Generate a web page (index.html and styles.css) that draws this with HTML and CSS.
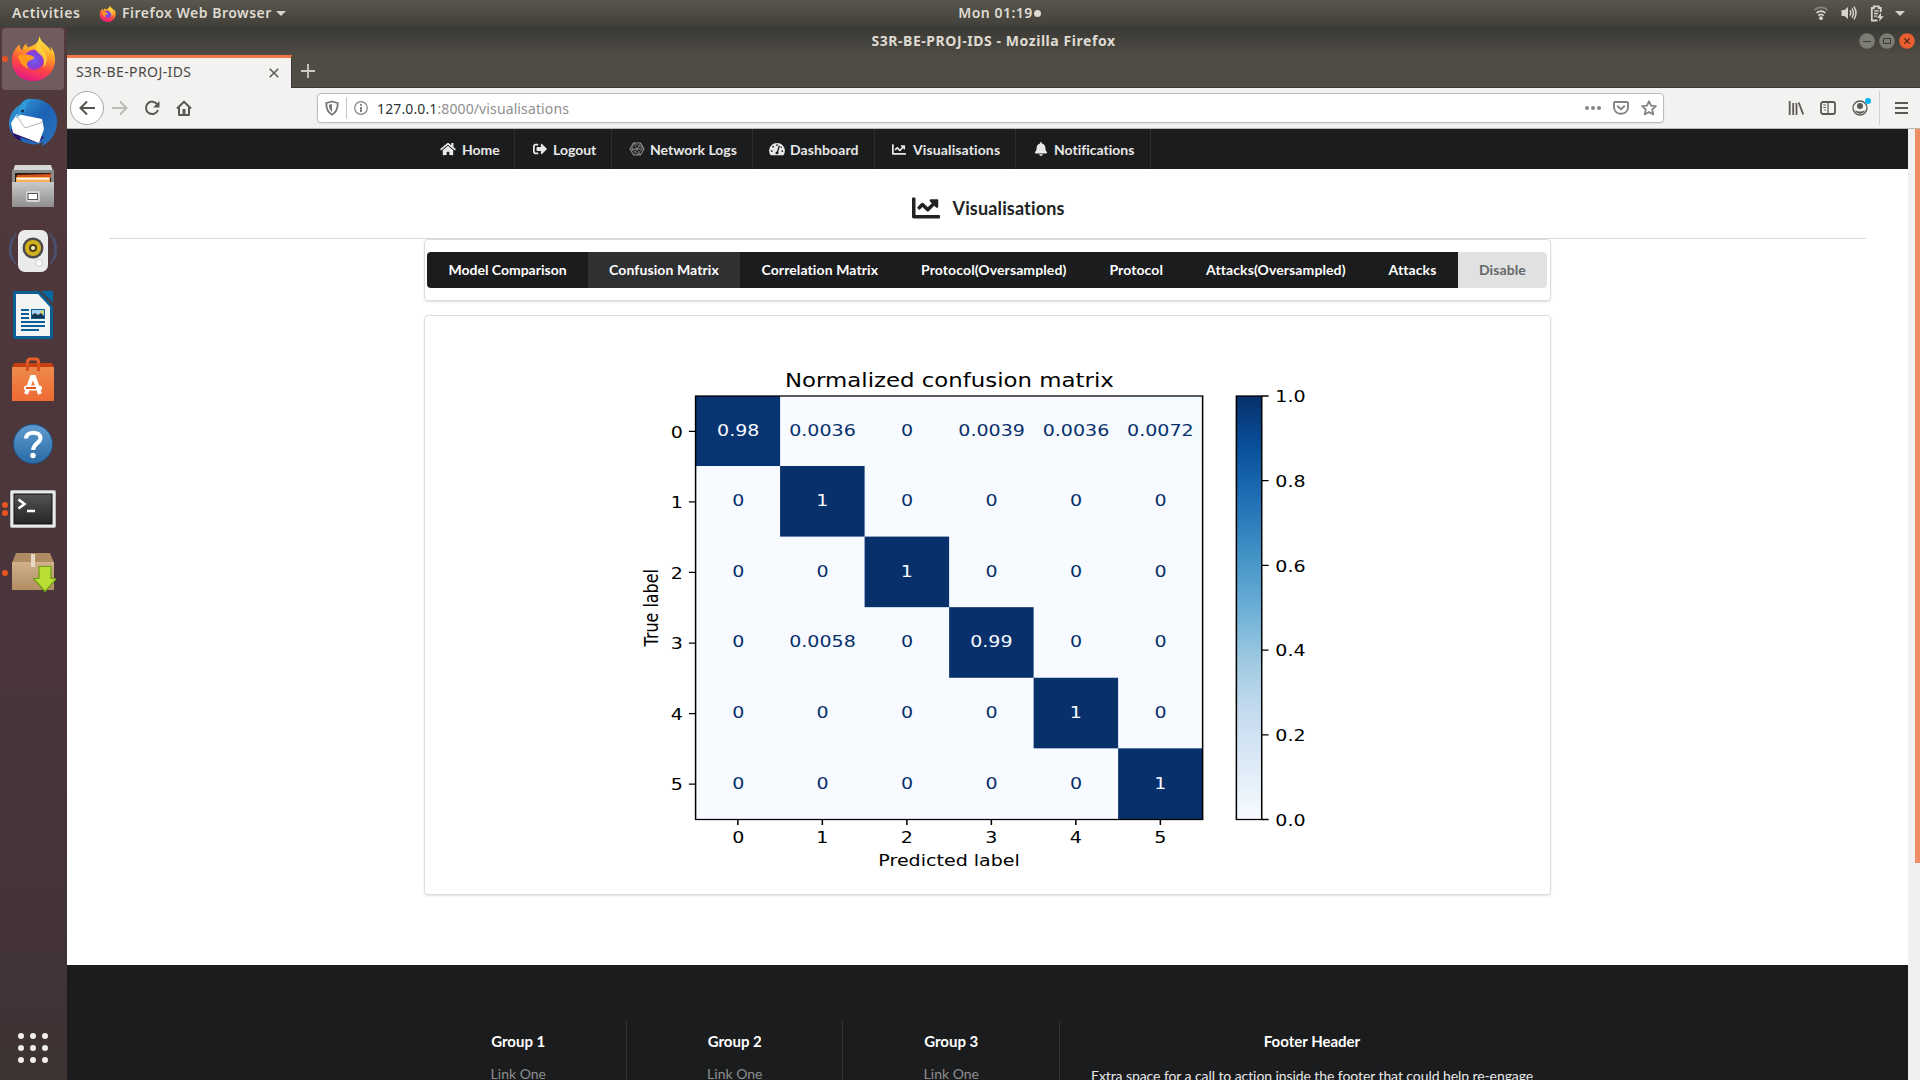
FILE: index.html
```html
<!DOCTYPE html>
<html lang="en">
<head>
<meta charset="utf-8">
<title>S3R-BE-PROJ-IDS</title>
<link rel="stylesheet" href="styles.css">
</head>
<body>
<svg width="0" height="0" class="defs">
  <defs>
    <linearGradient id="ffBody" x1="0.7" y1="0" x2="0.35" y2="1"><stop offset="0" stop-color="#fff44f"/><stop offset="0.35" stop-color="#ffa726"/><stop offset="0.65" stop-color="#ff4a40"/><stop offset="1" stop-color="#e5178a"/></linearGradient>
    <radialGradient id="ffGlobe"><stop offset="0" stop-color="#7a5cf5"/><stop offset="0.6" stop-color="#7b45d8"/><stop offset="1" stop-color="#a034d0"/></radialGradient>
    <symbol id="firefox" viewBox="0 0 48 48">
      <path fill="url(#ffBody)" d="M31 1c-1 3-1 5-4 8-3 2-6 3-8 4-1-1-2-2-2-4-3 2-4 4-4 7-1 0-3-2-3-6C4 15 2 21 2 27c0 12 10 21 22 21s23-9 23-22c0-7-2-11-5-14 1 2 1 4 1 5C41 11 31 8 31 1z"/>
      <circle cx="25" cy="26" r="10.5" fill="url(#ffGlobe)"/>
      <path fill="#ff9a1f" d="M8 22c4-2 9-2 13-1 2 1 4 1 4 3-1 2-5 2-7 5-1 2 0 4 2 6-6-1-9-5-12-13z"/>
      <path fill="#ffd53b" opacity=".85" d="M29 8c1 4 7 7 9 13 1 5 0 10-3 13 1-4 1-9-2-12-2-3-6-4-6-8 0-3 1-5 2-6z"/>
    </symbol>
    <symbol id="chart-line" viewBox="0 56 512 400"><path fill="currentColor" d="M496 384H64V80c0-8.84-7.16-16-16-16H16C7.16 64 0 71.16 0 80v336c0 17.67 14.33 32 32 32h464c8.84 0 16-7.16 16-16v-32c0-8.84-7.16-16-16-16zM464 96H345.94c-21.38 0-32.09 25.85-16.97 40.97l32.4 32.4L288 242.75l-73.37-73.37c-12.5-12.5-32.76-12.5-45.25 0l-68.69 68.69c-6.25 6.25-6.25 16.38 0 22.63l22.62 22.62c6.25 6.25 16.38 6.25 22.63 0L192 237.25l73.37 73.37c12.5 12.5 32.76 12.5 45.25 0l96-96 32.4 32.4c15.12 15.12 40.97 4.41 40.97-16.97V112c.01-8.84-7.15-16-15.99-16z"/></symbol>
    <linearGradient id="blues" x1="0" y1="0" x2="0" y2="1">
      <stop offset="0" stop-color="#08306b"/><stop offset=".125" stop-color="#08519c"/><stop offset=".25" stop-color="#2171b5"/><stop offset=".375" stop-color="#4292c6"/><stop offset=".5" stop-color="#6baed6"/><stop offset=".625" stop-color="#9ecae1"/><stop offset=".75" stop-color="#c6dbef"/><stop offset=".875" stop-color="#deebf7"/><stop offset="1" stop-color="#f7fbff"/>
    </linearGradient>
    <linearGradient id="metal" x1="0" y1="0" x2="0" y2="1"><stop offset="0" stop-color="#c9c9c9"/><stop offset="1" stop-color="#8f8f8f"/></linearGradient>
    <linearGradient id="tb" x1="0" y1="0" x2="1" y2="1"><stop offset="0" stop-color="#37a5dd"/><stop offset=".5" stop-color="#1d62b5"/><stop offset="1" stop-color="#2a74bd"/></linearGradient>
    <linearGradient id="bag" x1="0" y1="0" x2="0" y2="1"><stop offset="0" stop-color="#ee8a4c"/><stop offset="1" stop-color="#ee6b33"/></linearGradient>
    <linearGradient id="help" x1="0" y1="0" x2="0" y2="1"><stop offset="0" stop-color="#5f9bd0"/><stop offset="1" stop-color="#2a6ba6"/></linearGradient>
    <linearGradient id="term" x1="0" y1="0" x2="0" y2="1"><stop offset="0" stop-color="#555"/><stop offset="1" stop-color="#242424"/></linearGradient>
    <linearGradient id="box" x1="0" y1="0" x2="0" y2="1"><stop offset="0" stop-color="#cfb18a"/><stop offset="1" stop-color="#b28e63"/></linearGradient>
  </defs>
</svg>

<header class="topbar">
  <div class="topbar-left">
    <span class="activities">Activities</span>
    <svg class="ff-small" width="17" height="17"><use href="#firefox"/></svg>
    <span class="app-name">Firefox Web Browser</span>
    <i class="caret"></i>
  </div>
  <div class="clock"><span>Mon 01:19</span><i class="dot"></i></div>
  <div class="tray">
    <svg width="16" height="16" viewBox="0 0 16 16" fill="none" stroke="#d6d3cc" stroke-width="1.8"><path d="M1.5 5.2a9 9 0 0 1 13 0" opacity=".4"/><path d="M3.6 8a6 6 0 0 1 8.8 0"/><path d="M5.4 10.6a3.4 3.4 0 0 1 5.2 0"/><circle cx="8" cy="13.2" r="1.9" fill="#d6d3cc" stroke="none"/></svg>
    <svg width="16" height="16" viewBox="0 0 16 16" fill="none" stroke="#d6d3cc" stroke-width="1.5"><path d="M.5 5h3L7 2v12l-3.500-3h-3z" fill="#d6d3cc" stroke="none"/><path d="M9 5.500q1.500 2.500 0 5M11 3.500q3 4.500 0 9M13 1.700q4 6.300 0 12.600"/></svg>
    <svg width="16" height="17" viewBox="0 0 16 17" fill="none" stroke="#d6d3cc" stroke-width="1.8"><path d="M8.500 15.500H2.800V3h2V1.300h5V3h2v4"/><path d="M5 5.800h5M5 8.500h4M5 11.200h3" stroke-width="1.300"/><path d="M12 7.500 8 13h2.800L10 16.500l4.800-5.300H12z" fill="#d6d3cc" stroke="none"/></svg>
    <i class="caret"></i>
  </div>
</header>

<div class="desktop">
  <nav class="launcher">
    <div class="app active"><i class="pips"><b></b></i><svg width="46" height="48"><use href="#firefox"/></svg></div>
    <div class="app"><svg width="50" height="50" viewBox="0 0 50 50">
      <path fill="url(#tb)" d="M12 8C15 3 20 1 23 2c12-1 24 6 26 20 1 12-5 22-15 27 0-2 1-3 1-4-4 2-8 3-12 2C9 45 1 37 1 27 1 18 6 11 12 8z"/>
      <path fill="#2b0f66" d="M3 32c1 6 5 10 10 12l-1-4 18 6 6-6z"/>
      <path fill="#fff" d="M3 26 9 17 34 22l2 10-5 14L5 36z"/><path d="m8 18 9 13 18-6" fill="none" stroke="#b5b5b5"/>
      <path fill="#2f9bd6" d="M10 17c0-8 5-14 12-15-4 4-3 9-6 13l-8 6z"/><circle cx="14.500" cy="14" r="1.500" fill="#1d2b4f"/></svg></div>
    <div class="app"><svg width="44" height="46" viewBox="0 0 44 46">
      <path fill="#d8d8d8" d="M4 1h36l2 6H2z"/><path fill="#8c8c8c" d="M1 6h42v36H1z"/><path fill="#2b1a10" d="M4 9h36v12H4z"/><path fill="#d9531e" d="m6 11 34-1v4H6z"/><path fill="#f7b25a" d="M5 13h34v7H5z"/><path fill="#fff" d="M6 14h32v1.500H6z"/>
      <path fill="url(#metal)" d="M1 18h42v25H1z"/><rect x="15" y="27" width="14" height="11" rx="2" fill="#d5d5d5"/><rect x="17" y="29.500" width="9.500" height="6" fill="#fff" stroke="#555"/></svg></div>
    <div class="app"><svg width="50" height="46" viewBox="0 0 50 46">
      <g fill="none" stroke="#4a5070" stroke-width="1.500"><path d="M8 5q-10 17 0 32M4 10q-5 12 0 22M42 5q10 17 0 32M46 10q5 12 0 22"/></g>
      <rect x="10" y="2" width="30" height="42" rx="7" fill="#ebebeb"/><circle cx="25" cy="20" r="10.500" fill="#4b4b4b"/><circle cx="25" cy="20" r="8" fill="#d3b11e"/><circle cx="25" cy="20" r="4" fill="#4b3f13"/><circle cx="25" cy="20" r="2" fill="#f5efc9"/><circle cx="31" cy="35" r="3.500" fill="#fafafa" stroke="#ccc"/></svg></div>
    <div class="app"><svg width="40" height="48" viewBox="0 0 40 48">
      <path fill="#0c5f95" d="M1 0h27l12 13v33q0 2-2 2H2q-2 0-2-2V1z"/><path fill="#f3f4f5" d="M3 3h22l12 13v29H3z"/><path fill="#4c373b" d="M26 0h3l11 12.500v3z"/><path fill="#0369a3" d="M28 0h12v12z"/>
      <path stroke="#0c5f95" stroke-width="2" d="M8 19h8M8 23h8M8 27h8M8 31h24M8 35h24M8 39h18"/><rect x="18" y="18" width="14" height="10" fill="#0c5f95"/><rect x="19" y="19" width="12" height="8" fill="#a6d4ef"/><path fill="#15364c" d="m19 27v-3l3-2 3 2 3-2 3 3v2z"/><circle cx="29" cy="21" r="1.500" fill="#f2c52d"/></svg></div>
    <div class="app"><svg width="42" height="44" viewBox="0 0 42 44">
      <path fill="#c8400f" d="M2 6h38l2 5H0z"/><path fill="none" stroke="#e9602b" stroke-width="3" d="M15.500 14V5q0-3 3-3h5q3 0 3 3v9"/><path fill="url(#bag)" d="M0 10h42v34H0z"/><path fill="none" stroke="#d8501c" stroke-width="3" d="M15.500 14V6M26.500 14V6"/>
      <path fill="none" stroke="#fff" stroke-width="4" d="m14 37 6-17h2l6 17"/><rect x="12" y="28.500" width="18" height="5" rx="2.500" fill="#fff"/><path stroke="#e8591f" stroke-width="2" d="M14 31h10"/></svg></div>
    <div class="app"><svg width="40" height="40" viewBox="0 0 40 40"><circle cx="20" cy="20" r="19.500" fill="url(#help)" stroke="#1f5788"/><path fill="none" stroke="#fff" stroke-width="4" d="M13 14.500c0-8 14.500-7.500 14.500-.5 0 5.500-7.300 5-7.300 12"/><circle cx="20" cy="31.500" r="2.700" fill="#fff"/></svg></div>
    <div class="app low"><i class="pips"><b></b><b></b></i><svg width="46" height="38" viewBox="0 0 46 38"><rect width="46" height="38" rx="2" fill="#b9b9b9"/><rect x="1" y="1" width="44" height="36" fill="#e9e9e9"/><rect x="4" y="4" width="38" height="30" fill="url(#term)" stroke="#111"/><path fill="none" stroke="#fff" stroke-width="2.600" d="m8.500 9.500 6 4.500-6 4.500M17 21h8"/></svg></div>
    <div class="app low"><i class="pips"><b></b></i><svg width="46" height="40" viewBox="-2 0 46 40"><path fill="#ae8b63" d="M4 0h34l4 10H0z"/><path fill="url(#box)" d="M0 9h42v28H0z"/><path fill="#e6d8c4" d="M19 1h4v13h-4z"/><path fill="#b9df35" stroke="#6d9c17" stroke-width="1.200" d="M27 13.500h12v12h5.500L33 38.500 21.500 25.500H27z"/></svg></div>
    <div class="grid-button"><i></i><i></i><i></i><i></i><i></i><i></i><i></i><i></i><i></i></div>
  </nav>

  <main class="window">
    <div class="titlebar">
      <span class="window-title">S3R-BE-PROJ-IDS - Mozilla Firefox</span>
      <div class="window-buttons">
        <svg width="16" height="16" viewBox="0 0 16 16"><circle cx="8" cy="8" r="7.800" fill="#7c7b74"/><path d="M4 8.500h8" stroke="#3c3b37"/></svg>
        <svg width="16" height="16" viewBox="0 0 16 16"><circle cx="8" cy="8" r="7.800" fill="#7c7b74"/><path d="M4.500 5.500h7v5h-7z" fill="none" stroke="#3c3b37"/></svg>
        <svg width="16" height="16" viewBox="0 0 16 16"><circle cx="8" cy="8" r="7.800" fill="#ea5f31"/><path d="m5.300 5.300 5.400 5.400m0-5.400-5.400 5.400" stroke="#42231a" stroke-width="1.200"/></svg>
      </div>
    </div>
    <div class="tabstrip">
      <div class="tab"><span>S3R-BE-PROJ-IDS</span><svg width="10" height="10" viewBox="0 0 10 10"><path d="m.7.7 8.600 8.600m0-8.600L.7 9.300" stroke="#55534e" stroke-width="1.400"/></svg></div>
      <svg class="new-tab" width="14" height="14" viewBox="0 0 14 14"><path d="M7 0v14M0 7h14" stroke="#cfcdc7" stroke-width="1.800"/></svg>
    </div>
    <div class="toolbar">
      <div class="back"><svg width="16" height="16" viewBox="0 0 16 16"><path d="M16 8H1.500M8 1.500 1.500 8 8 14.500" fill="none" stroke="#55534f" stroke-width="2"/></svg></div>
      <svg width="16" height="16" viewBox="0 0 16 16"><path d="M0 8h14.500M8 1.500 14.500 8 8 14.500" fill="none" stroke="#bdbbb8" stroke-width="2"/></svg>
      <svg width="16" height="16" viewBox="0 0 16 16"><path d="M13.300 4.300A6.200 6.200 0 1 0 14 10" fill="none" stroke="#5b5955" stroke-width="2"/><path d="M15.500 1v6.500H9z" fill="#5b5955"/></svg>
      <svg width="16" height="16" viewBox="0 0 16 16"><path d="M1 8.500 8 1.700l7 6.800M3 7v8h10V7" fill="none" stroke="#5b5955" stroke-width="2" stroke-linejoin="round"/><path d="M6.500 9h3v6h-3z" fill="#5b5955"/></svg>
      <div class="urlbar">
        <svg width="14" height="16" viewBox="0 0 14 16"><path d="M7 1.500 12.800 3c0 5-.8 9-5.800 11.700C2 12 1.200 8 1.200 3z" fill="none" stroke="#737373" stroke-width="1.800" stroke-linejoin="round"/><path d="M7 4v8C4.500 10 4 7.500 4 4.800z" fill="#737373"/></svg>
        <i class="url-sep"></i>
        <svg width="14" height="14" viewBox="0 0 14 14"><circle cx="7" cy="7" r="6.300" fill="none" stroke="#858585" stroke-width="1.200"/><path d="M7 6v5M7 3v1.800" stroke="#737373" stroke-width="1.800"/></svg>
        <span class="url"><b>127.0.0.1</b>:8000/visualisations</span>
        <svg width="16" height="16" viewBox="0 0 16 16" fill="#858585"><circle cx="2" cy="8" r="2"/><circle cx="8" cy="8" r="2"/><circle cx="14" cy="8" r="2"/></svg>
        <svg width="16" height="16" viewBox="0 0 16 16" fill="none" stroke="#858585" stroke-width="2" stroke-linecap="round" stroke-linejoin="round"><path d="M2 2h12q1 0 1 1v4c0 9-14 9-14 0V3q0-1 1-1z"/><path d="M4.800 6.300 8 9.300l3.200-3"/></svg>
        <svg width="16" height="16" viewBox="0 0 16 16"><path d="m8 1.200 2 4.500 4.900.5-3.700 3.300 1.100 4.900L8 12l-4.300 2.400 1.100-4.900L1.100 6.200 6 5.700z" fill="none" stroke="#858585" stroke-width="1.800" stroke-linejoin="round"/></svg>
      </div>
      <svg class="library" width="16" height="16" viewBox="0 0 16 16"><path d="M1.700 1v14M5.200 3v12M8.500 3v12M10.700 2.500l4.500 12" stroke="#5b5955" stroke-width="1.800"/></svg>
      <svg width="16" height="16" viewBox="0 0 16 16"><rect x="1" y="2" width="14" height="12" rx="2" fill="none" stroke="#5b5955" stroke-width="1.800"/><path d="M8 2v12M3.200 5h2.600M3.200 7.500h2.600M4.200 10h1.600" stroke="#5b5955" stroke-width="1.200"/></svg>
      <div class="account"><svg width="16" height="16" viewBox="0 0 16 16"><circle cx="8" cy="8" r="7" fill="none" stroke="#5b5955" stroke-width="1.300"/><circle cx="8" cy="6" r="3" fill="#5b5955"/><path d="M3 10c3 2 7 2 10 0-1 5-9 5-10 0z" fill="#5b5955"/></svg><i></i></div>
      <i class="tool-sep"></i>
      <svg width="13" height="14" viewBox="0 0 13 14"><path d="M0 2h13M0 7h13M0 12h13" stroke="#5b5955" stroke-width="2"/></svg>
    </div>

    <div class="viewport">
      <div class="page">
        <nav class="site-nav">
          <a class="item home"><svg width="16" height="14" viewBox="0 0 576 512"><path fill="currentColor" d="M280.37 148.26L96 300.11V464a16 16 0 0 0 16 16l112.06-.29a16 16 0 0 0 15.92-16V368a16 16 0 0 1 16-16h64a16 16 0 0 1 16 16v95.64a16 16 0 0 0 16 16.05L464 480a16 16 0 0 0 16-16V300L295.67 148.26a12.19 12.19 0 0 0-15.3 0zM571.6 251.47L488 182.56V44.05a12 12 0 0 0-12-12h-56a12 12 0 0 0-12 12v72.61L318.47 43a48 48 0 0 0-61 0L4.34 251.47a12 12 0 0 0-1.6 16.9l25.5 31A12 12 0 0 0 45.15 301l235.22-193.74a12.19 12.19 0 0 1 15.3 0L530.9 301a12 12 0 0 0 16.9-1.6l25.5-31a12 12 0 0 0-1.7-16.93z"/></svg>Home</a>
          <a class="item logout"><svg width="16" height="14" viewBox="0 0 512 512"><path fill="currentColor" d="M497 273L329 441c-15 15-41 4.500-41-17v-96H152c-13.300 0-24-10.700-24-24v-96c0-13.300 10.700-24 24-24h136V88c0-21.400 25.900-32 41-17l168 168c9.300 9.400 9.300 24.600 0 34zM192 436v-40c0-6.600-5.400-12-12-12H96c-17.700 0-32-14.300-32-32V160c0-17.700 14.300-32 32-32h84c6.600 0 12-5.400 12-12V76c0-6.600-5.400-12-12-12H96c-53 0-96 43-96 96v192c0 53 43 96 96 96h84c6.600 0 12-5.400 12-12z"/></svg>Logout</a>
          <a class="item logs"><svg width="16" height="16" viewBox="0 0 16 16" fill="none" stroke="#8d8e8e" stroke-width=".7"><path stroke-width="1.100" d="M4.500 2h7L15 8l-3.500 6h-7L1 8z"/><path d="m4.500 2 7 12M11.500 2l-7 12M1 8h14M4.500 2 3 9l8.500 5M11.500 2 13 8l-5 6M4.500 2 12 6M3 9l8-2"/></svg>Network Logs</a>
          <a class="item dash"><svg width="16" height="14" viewBox="0 0 576 512"><path fill="currentColor" d="M288 32C129 32 0 161 0 320c0 53 14 102 39 145 6 10 16 15 27 15h444c11 0 21-5 27-15 25-43 39-92 39-145C576 161 447 32 288 32z"/><g fill="#1b1c1d"><circle cx="288" cy="110" r="32"/><circle cx="145" cy="170" r="32"/><circle cx="96" cy="330" r="32"/><circle cx="480" cy="330" r="32"/><path d="m355 130 44 15-65 210c22 40 10 90-46 90-70 0-80-80-2-102z"/><circle cx="445" cy="195" r="28"/></g></svg>Dashboard</a>
          <a class="item vis"><svg width="14" height="11"><use href="#chart-line"/></svg>Visualisations</a>
          <a class="item bell"><svg width="14" height="14" viewBox="0 0 448 512"><path fill="currentColor" d="M224 512c35.320 0 63.970-28.650 63.970-64H160.030c0 35.350 28.650 64 63.970 64zm215.390-149.710c-19.320-20.760-55.470-51.990-55.470-154.290 0-77.700-54.480-139.900-127.940-155.160V32c0-17.670-14.320-32-31.980-32s-31.980 14.330-31.980 32v20.840C118.560 68.100 64.080 130.300 64.080 208c0 102.300-36.150 133.530-55.470 154.290-6 6.450-8.660 14.160-8.610 21.710.11 16.400 12.980 32 32.100 32h383.800c19.120 0 32-15.600 32.100-32 .05-7.550-2.610-15.270-8.610-21.710z"/></svg>Notifications</a>
        </nav>

        <h3 class="page-title"><svg width="28" height="22"><use href="#chart-line"/></svg>Visualisations</h3>

        <section class="segment button-segment">
          <div class="buttons">
            <button>Model Comparison</button><button class="active">Confusion Matrix</button><button>Correlation Matrix</button><button>Protocol(Oversampled)</button><button>Protocol</button><button>Attacks(Oversampled)</button><button>Attacks</button><button class="disable">Disable</button>
          </div>
        </section>

        <section class="segment chart-segment">
          <svg class="chart" width="878" height="550" viewBox="0.35 0 640 480" preserveAspectRatio="none">
            <rect x="107.200" y="57.600" width="369.600" height="369.600" fill="#f7fbff"/>
            <rect x="415.200" y="57.600" width="61.600" height="61.600" fill="#f5fafe"/>
            <rect x="168.800" y="242.400" width="61.600" height="61.600" fill="#f6faff"/>
            <g fill="#08306b">
              <rect x="107.200" y="57.600" width="61.600" height="61.100" fill="#083471"/><rect x="168.800" y="118.700" width="61.600" height="61.600"/><rect x="230.400" y="180.300" width="61.600" height="61.600"/><rect x="292" y="241.900" width="61.600" height="61.600"/><rect x="353.600" y="303.500" width="61.600" height="61.600"/><rect x="415.200" y="365.100" width="61.600" height="62.100"/>
            </g>
            <rect x="107.200" y="57.600" width="369.600" height="369.600" fill="none" stroke="#000" stroke-width="1.110"/>
            <rect x="501.400" y="57.600" width="18.480" height="369.600" fill="url(#blues)" stroke="#000" stroke-width="1.110"/>
            <path stroke="#000" stroke-width="1.110" d="M102.300 88.400h4.900M102.300 150h4.900M102.300 211.600h4.900M102.300 273.200h4.900M102.300 334.800h4.900M102.300 396.400h4.900M138 427.200v4.900M199.600 427.200v4.900M261.200 427.200v4.900M322.800 427.200v4.900M384.400 427.200v4.900M446 427.200v4.900M520 57.600h4.900M520 131.520h4.900M520 205.440h4.900M520 279.360h4.900M520 353.280h4.900M520 427.200h4.900"/>
            <g class="values">
              <text class="on" x="138.300" y="92.500">0.98</text><text x="199.700" y="92.500">0.0036</text><text x="261.400" y="92.500">0</text><text x="323" y="92.500">0.0039</text><text x="384.500" y="92.500">0.0036</text><text x="446" y="92.500">0.0072</text>
              <text x="138.300" y="153.900">0</text><text class="on" x="199.500" y="153.900">1</text><text x="261.400" y="153.900">0</text><text x="323" y="153.900">0</text><text x="384.600" y="153.900">0</text><text x="446.200" y="153.900">0</text>
              <text x="138.300" y="215.500">0</text><text x="199.800" y="215.500">0</text><text class="on" x="261.200" y="215.500">1</text><text x="323" y="215.500">0</text><text x="384.600" y="215.500">0</text><text x="446.200" y="215.500">0</text>
              <text x="138.300" y="277.100">0</text><text x="199.700" y="277.100">0.0058</text><text x="261.400" y="277.100">0</text><text class="on" x="322.800" y="277.100">0.99</text><text x="384.600" y="277.100">0</text><text x="446.200" y="277.100">0</text>
              <text x="138.300" y="338.900">0</text><text x="199.800" y="338.900">0</text><text x="261.400" y="338.900">0</text><text x="323" y="338.900">0</text><text class="on" x="384.400" y="338.900">1</text><text x="446.200" y="338.900">0</text>
              <text x="138.300" y="400.500">0</text><text x="199.800" y="400.500">0</text><text x="261.400" y="400.500">0</text><text x="323" y="400.500">0</text><text x="384.600" y="400.500">0</text><text class="on" x="446" y="400.500">1</text>
            </g>
            <g class="ticks-y"><text x="98" y="94.100">0</text><text x="98" y="155.700">1</text><text x="98" y="217.300">2</text><text x="98" y="278.700">3</text><text x="98" y="340.300">4</text><text x="98" y="401.900">5</text></g>
            <g class="ticks-x"><text x="138.300" y="447.700">0</text><text x="199.600" y="447.700">1</text><text x="261.200" y="447.700">2</text><text x="322.800" y="447.700">3</text><text x="384.400" y="447.700">4</text><text x="446" y="447.700">5</text></g>
            <g class="ticks-bar"><text x="529.800" y="62.800">1.0</text><text x="529.800" y="136.800">0.8</text><text x="529.800" y="210.800">0.6</text><text x="529.800" y="284.800">0.4</text><text x="529.800" y="358.700">0.2</text><text x="529.800" y="432.500">0.0</text></g>
            <text class="chart-title" x="292.200" y="49.500">Normalized confusion matrix</text>
            <text class="axis-label" x="292" y="467.500">Predicted label</text>
            <text class="axis-label" transform="translate(80 242.400) rotate(-90)">True label</text>
          </svg>
        </section>

        <footer class="footer">
          <div class="footer-grid">
            <div class="col"><h4>Group 1</h4><a>Link One</a></div>
            <div class="col"><h4>Group 2</h4><a>Link One</a></div>
            <div class="col"><h4>Group 3</h4><a>Link One</a></div>
            <div class="col wide"><h4>Footer Header</h4><p>Extra space for a call to action inside the footer that could help re-engage</p></div>
          </div>
        </footer>
      </div>
      <div class="scrollbar"><i></i></div>
    </div>
  </main>
</div>
</body>
</html>
```
FILE: styles.css
```css
* { box-sizing: border-box; }
body { margin: 0; width: 1920px; height: 1080px; overflow: hidden; display: flex; flex-direction: column; font-family: "Noto Sans", "Open Sans", sans-serif; font-variant-ligatures: none; background: #fff; }
svg { flex: none; display: block; }
.defs { position: absolute; }

/* desktop top bar */
.topbar { height: 27px; flex: none; display: grid; grid-template-columns: 1fr auto 1fr; align-items: center; background: linear-gradient(#59564d, #403f39); color: #dfdbd2; font-size: 14px; font-weight: 600; line-height: 24px; letter-spacing: .5px; white-space: nowrap; }
.topbar-left { display: flex; align-items: center; padding-left: 12px; }
.topbar span { padding-bottom: 2px; }
.activities { width: 68px; letter-spacing: .6px; }
.ff-small { margin: 0 5px 0 19px; }
.app-name { width: 150px; margin-left: 1px; letter-spacing: .5px; }
.caret { border: 5px solid transparent; border-top-color: #d6d3cc; border-bottom: 0; margin-left: 4px; }
.clock { display: flex; align-items: center; gap: 1px; padding-left: 79px; }
.dot { width: 7px; height: 7px; border-radius: 50%; background: #dfdbd2; }
.tray { display: flex; justify-content: flex-end; align-items: center; gap: 12px; padding: 0 15px 1px 0; }
.tray .caret { margin: 0 0 0 -2px; }

.desktop { flex: 1; display: flex; min-height: 0; }

/* launcher */
.launcher { width: 67px; flex: none; display: flex; flex-direction: column; gap: 2.3px; padding: 1px 3px 0 2px; background: linear-gradient(#52393c, #4b363a 45%, #45333a 82%, #3d3333); }
.app { width: 62px; height: 62px; flex: none; display: flex; align-items: center; justify-content: center; position: relative; border-radius: 4px; padding-bottom: 2px; }
.app.active { background: #705c5f; }
.app.low { padding-bottom: 0; }
.pips { position: absolute; left: 0; top: 0; bottom: 0; display: flex; flex-direction: column; justify-content: center; gap: 2px; }
.pips b { width: 6px; height: 6px; border-radius: 50%; background: #e95420; }
.grid-button { margin: auto 0 17px 16px; display: grid; grid-template-columns: repeat(3, 6px); gap: 6px; }
.grid-button i { width: 6px; height: 6px; border-radius: 50%; background: #f0eeec; }

/* browser window */
.window { flex: 1; min-width: 0; display: flex; flex-direction: column; }
.titlebar { height: 28px; flex: none; display: flex; align-items: center; justify-content: center; position: relative; padding-bottom: 1px; background: linear-gradient(#3a3935, #4e4b44); }
.window-title { color: #dfdbd2; font-size: 14px; font-weight: 700; line-height: 28px; letter-spacing: .56px; white-space: nowrap; }
.window-buttons { position: absolute; right: 5px; top: 6px; display: flex; gap: 4px; }
.tabstrip { height: 33px; flex: none; display: flex; background: #504d45; border-bottom: 1px solid #3a3935; }
.tab { width: 225px; height: 33px; display: flex; align-items: center; justify-content: space-between; padding: 0 12px 1px 9px; background: #f3f2f1; border-top: 3px solid #f07746; border-right: 1px solid #3a3935; color: #4a4944; font-size: 14px; line-height: 26px; letter-spacing: .4px; position: relative; z-index: 1; }
.tab span { padding-bottom: 2px; }
.new-tab { margin: 9px 0 0 9px; }
.toolbar { height: 41px; flex: none; display: flex; align-items: center; padding: 0 12px 1px 3px; background: #f3f2f1; border-bottom: 1px solid #b9b6b0; gap: 16px; }
.back { width: 34px; height: 34px; flex: none; border-radius: 50%; border: 1px solid #a9a7a4; background: #fff; display: flex; align-items: center; justify-content: center; margin-right: -8px; }
.urlbar { width: 1347px; flex: none; height: 30px; margin-left: 109px; border: 1px solid #bfbdba; border-radius: 4px; background: #fff; display: flex; align-items: center; padding: 0 6px 0 7px; box-shadow: 0 1px 2px #0001; }
.url-sep { width: 1px; height: 22px; background: #c5c4c2; margin: 0 7px; }
.url { flex: 1; margin-left: 9px; padding-top: 1px; font-size: 14px; color: #8e8e8e; line-height: 27px; letter-spacing: .12px; }
.url b { font-weight: 400; color: #2e3436; }
.url ~ svg { margin-left: 12px; }
.library { margin-left: 108px; }
.account { position: relative; flex: none; }
.account i { position: absolute; right: -3px; top: -2px; width: 6px; height: 6px; border-radius: 50%; background: #00b3f4; }
.tool-sep { width: 1px; height: 34px; flex: none; background: #d2d0ce; margin: 0 -1px 0 -5px; }

.viewport { flex: 1; min-height: 0; display: flex; }
.page { flex: 1; overflow: hidden; display: flex; flex-direction: column; align-items: center; font-family: Lato, sans-serif; font-size: 14px; background: #fff; }
.scrollbar { width: 12px; background: #f1f0ee; display: flex; justify-content: flex-end; }
.scrollbar i { width: 5px; height: 734px; background: #f08c66; }

/* site navigation */
.site-nav { width: 100%; height: 40px; flex: none; display: flex; padding-left: 357px; background: #1b1c1d; color: #e8e8e8; }
.item { height: 40px; display: flex; align-items: center; gap: 6px; padding-left: 16px; border-right: 1px solid #2d2e2f; font-weight: 700; white-space: nowrap; }
.home { width: 91px; }
.logout { width: 97px; padding-left: 17px; gap: 5px; }
.logs { width: 141px; padding-left: 17px; gap: 5px; }
.dash { width: 122px; padding-left: 16px; gap: 5px; letter-spacing: .1px; }
.vis { width: 141px; padding-left: 17px; gap: 7px; letter-spacing: .12px; }
.bell { width: 135px; padding-left: 18px; }

.page-title { width: 1757px; height: 70px; flex: none; margin: 0; display: flex; align-items: center; justify-content: center; gap: 12px; padding: 9px 0 0 2px; border-bottom: 1px solid #d9dadb; color: #212223; font-size: 18px; font-weight: 700; letter-spacing: .15px; }
.segment { width: 1127px; flex: none; border: 1px solid #dcddde; border-radius: 4px; box-shadow: 0 1px 2px #22242626; }
.button-segment { height: 62px; padding: 12px 3px 12px 2px; }
.buttons { display: flex; height: 36px; border-radius: 4px; overflow: hidden; }
.buttons button { flex: auto; padding: 0 0 2px; border: 0; background: #1b1c1d; color: #fff; font: 700 14px Lato, sans-serif; letter-spacing: .1px; }
.buttons button:first-child { flex: 0 0 161px; letter-spacing: 0; }
.buttons .active { flex: 0 0 152px; background: #2f3032; }
.buttons .disable { flex: 0 0 89px; background: #e0e1e2; color: #666768; }
.chart-segment { height: 580px; margin-top: 14px; padding: 14px 0 0; display: flex; justify-content: center; }

.chart text { font-family: "DejaVu Sans", sans-serif; font-size: 13.89px; fill: #000; text-anchor: middle; }
.chart .values text { fill: #08306b; }
.chart .values .on { fill: #f7fbff; }
.chart .ticks-y text { text-anchor: end; }
.chart .ticks-bar text { text-anchor: start; }
.chart .chart-title { font-size: 16.67px; }

.footer { width: 100%; height: 400px; flex: none; margin-top: 70px; padding-top: 56px; background: #1b1c1d; color: #fff; display: flex; justify-content: center; }
.footer-grid { width: 1155px; display: flex; }
.col { width: 216.5px; text-align: center; border-right: 1px solid #323334; padding: 11px 0 0 1px; }
.col.wide { width: 505px; border: 0; padding-left: 0; }
.col h4 { margin: 0; font-size: 15px; font-weight: 700; line-height: 19px; }
.col a { display: block; margin-top: 13px; line-height: 20px; color: #8d8e8e; }
.col p { margin: 15px 20px 0; line-height: 20px; color: #e8e8e8; letter-spacing: -.08px; }
```
